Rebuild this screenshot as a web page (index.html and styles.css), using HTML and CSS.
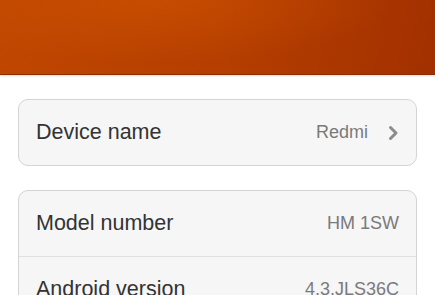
FILE: index.html
```html
<!DOCTYPE html>
<html lang="en">
<head>
    <meta charset="UTF-8">
    <meta name="viewport" content="width=device-width, initial-scale=1.0">
    <title>About phone</title>
    <link rel="stylesheet" href="styles.css">
</head>
<body>
    <div class="header"></div>

    <div class="content">
        <div class="group">
            <div class="row">
                <div class="label">Device name</div>
                <div class="value">Redmi</div>
                <svg class="chevron" viewBox="0 0 11 16">
                    <path d="M2.5 2.5l5.5 5.5-5.5 5.5"/>
                </svg>
            </div>
        </div>

        <div class="group">
            <div class="row">
                <div class="label">Model number</div>
                <div class="value">HM 1SW</div>
            </div>
            <div class="row">
                <div class="label">Android version</div>
                <div class="value">4.3.JLS36C</div>
            </div>
        </div>
    </div>
</body>
</html>
```

FILE: styles.css
```css
* {
    margin: 0;
    padding: 0;
    box-sizing: border-box;
}

body {
    background: #ffffff;
    font-family: 'Liberation Sans', Arial, sans-serif;
    overflow: hidden;
}

.header {
    height: 75px;
    background:
        radial-gradient(ellipse at 35% 0%, rgba(210, 85, 0, 0.55) 0%, rgba(210, 85, 0, 0) 60%),
        linear-gradient(100deg, #bf4700 0%, #b63f00 50%, #a23000 100%);
    border-bottom: 1px solid #8e2c00;
    box-shadow: 0 1px 2px rgba(0, 0, 0, 0.15);
}

.content {
    display: flex;
    flex-direction: column;
    gap: 24px;
    padding: 24px 18px 0;
}

.group {
    background: #f6f6f6;
    border: 1px solid #d4d4d4;
    border-radius: 10px;
}

.row {
    height: 65px;
    display: flex;
    align-items: center;
    padding: 0 17px 0 17px;
    gap: 20px;
}

.row + .row {
    border-top: 1px solid #e0e0e0;
}

.label {
    flex: 1;
    font-size: 21.5px;
    color: #333333;
}

.value {
    font-size: 18px;
    color: #7a7a7a;
}

.chevron {
    width: 11px;
    height: 16px;
    fill: none;
    stroke: #8c8c8c;
    stroke-width: 3;
    stroke-linecap: round;
    stroke-linejoin: round;
}
```
